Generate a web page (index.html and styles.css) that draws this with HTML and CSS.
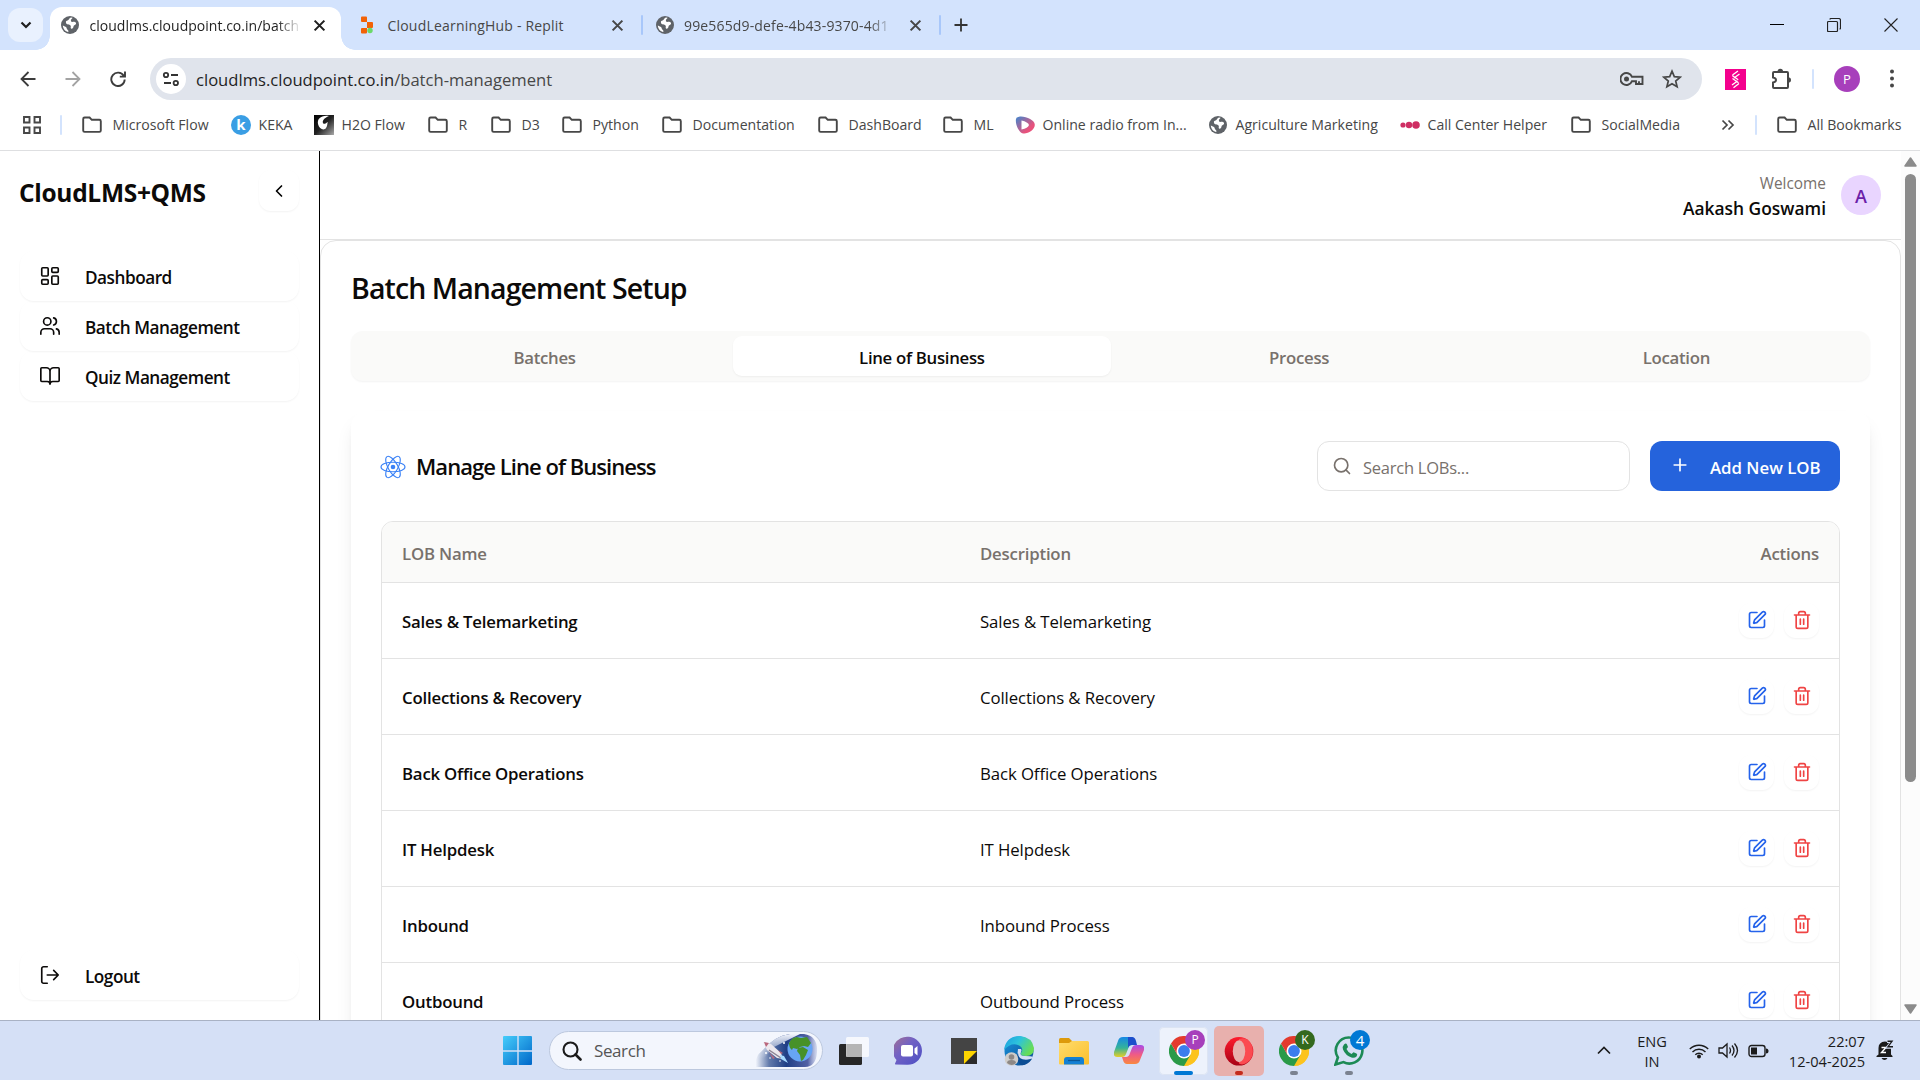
FILE: index.html
```
<!DOCTYPE html>
<html lang="en">
<head>
<meta charset="utf-8">
<title>CloudLMS+QMS - Batch Management</title>
<link rel="stylesheet" href="styles.css">
</head>
<body>
<svg class="defs" aria-hidden="true">
  <defs>
    <linearGradient id="gWin" x1="0" y1="0" x2="1" y2="1"><stop offset="0" stop-color="#45cdfb"/><stop offset="1" stop-color="#0067c9"/></linearGradient>
    <linearGradient id="gRadio" x1="0" y1="0" x2="1" y2="1"><stop offset=".1" stop-color="#5480c4"/><stop offset=".7" stop-color="#e8527c"/></linearGradient>
    <linearGradient id="gH2o" x1="0" y1="0" x2="1" y2="1"><stop offset="0" stop-color="#000"/><stop offset=".5" stop-color="#222"/><stop offset="1" stop-color="#aaa"/></linearGradient>
    <linearGradient id="gChat" x1="0" y1="0" x2="1" y2="1"><stop offset="0" stop-color="#a57090"/><stop offset=".4" stop-color="#7262c4"/><stop offset="1" stop-color="#4c4fc4"/></linearGradient>
    <linearGradient id="gEdgeTop" x1="0" y1="0" x2="1" y2=".5"><stop offset="0" stop-color="#1a9be0"/><stop offset=".5" stop-color="#2dc3dc"/><stop offset="1" stop-color="#68dd55"/></linearGradient>
    <linearGradient id="gEdgeLow" x1="0" y1="0" x2="1" y2="1"><stop offset="0" stop-color="#1994dc"/><stop offset="1" stop-color="#0b4a92"/></linearGradient>
    <linearGradient id="gFolder" x1="0" y1="0" x2="1" y2="1"><stop offset="0" stop-color="#ffdc6d"/><stop offset="1" stop-color="#fbbf2b"/></linearGradient>
    <linearGradient id="gCopA" x1="0" y1="0" x2="0" y2="1"><stop offset="0" stop-color="#1688e6"/><stop offset=".55" stop-color="#35b398"/><stop offset="1" stop-color="#e6cf27"/></linearGradient>
    <linearGradient id="gCopB" x1="0" y1="0" x2="0" y2="1"><stop offset="0" stop-color="#a84be8"/><stop offset=".5" stop-color="#ef5b86"/><stop offset="1" stop-color="#f9893f"/></linearGradient>
    <linearGradient id="gOpera" x1="0" y1="0" x2="0" y2="1"><stop offset="0" stop-color="#ff1b2d"/><stop offset="1" stop-color="#a70014"/></linearGradient>
    <linearGradient id="gSpace" x1="0" y1="0" x2="1" y2="0"><stop offset="0" stop-color="#31508f" stop-opacity="0"/><stop offset=".22" stop-color="#31508f" stop-opacity=".75"/><stop offset=".5" stop-color="#1f3e85"/><stop offset=".85" stop-color="#5362a5"/><stop offset="1" stop-color="#8e9bd0" stop-opacity=".3"/></linearGradient>
    <linearGradient id="gFade" x1="0" y1="0" x2="0" y2="1"><stop offset="0" stop-color="#f3f6fd"/><stop offset=".75" stop-color="#f3f6fd" stop-opacity="0"/></linearGradient>
    <symbol id="folder" viewBox="0 0 20 20"><path d="M1.2 3.9q0-1.4 1.4-1.4h5l2.2 2.3h7.6q1.4 0 1.4 1.4v9.3q0 1.4-1.4 1.4H2.6q-1.4 0-1.4-1.4z" fill="none" stroke="#474747" stroke-width="1.9"/></symbol>
    <symbol id="globe" viewBox="0 0 20 20"><circle cx="10" cy="10" r="9" fill="#5f6368"/><path d="M11 2.6c-2 .2-1.500 2-3 2.600S5.500 6 6 8s3.500 1 4.500 2.500-.500 2 .500 3 2.500-.500 2.500-2 1.500-1 2.500-2.500c.300-1-.400-2.500-2.500-2.200s-3-.300-2.500-1.800 1.500-1.200 1.500-2.200zM2.800 10.500l3.200 1.600c1 .800.500 2 1.500 2.700s1 1.500.800 2.300C5.500 16.500 3.100 14 2.800 10.500z" fill="#fff"/></symbol>
    <symbol id="close" viewBox="0 0 12 12"><path d="M1.500 1.500l9 9M10.500 1.500l-9 9" stroke="currentColor" stroke-width="1.900" fill="none"/></symbol>
    <symbol id="edit" viewBox="0 0 24 24"><path d="M12 3H5a2 2 0 0 0-2 2v14a2 2 0 0 0 2 2h14a2 2 0 0 0 2-2v-7M18.375 2.625a1 1 0 0 1 3 3l-9.013 9.014a2 2 0 0 1-.853.505l-2.873.84a.5.5 0 0 1-.62-.62l.84-2.873a2 2 0 0 1 .506-.852z"/></symbol>
    <symbol id="trash" viewBox="0 0 24 24"><path d="M3 6h18M19 6v14c0 1-1 2-2 2H7c-1 0-2-1-2-2V6M8 6V4c0-1 1-2 2-2h4c1 0 2 1 2 2v2M10 11v6M14 11v6"/></symbol>
    <symbol id="chrome" viewBox="0 0 30 30"><path d="M15 15L2 7.500A15 15 0 0 1 28 7.500z" fill="#e33b2e"/><path d="M15 15L28 7.500A15 15 0 0 1 15 30z" fill="#fcc31e"/><path d="M28 7.500H15L21.500 18.700 15 30A15 15 0 0 0 28 7.500z" fill="#fcc31e"/><path d="M2 7.500A15 15 0 0 0 15 30l6.500-11.300L15 15 8.500 18.700z" fill="#2a9a48"/><path d="M2 7.500L8.500 18.700 15 7.500z" fill="#e33b2e"/><circle cx="15" cy="15" r="7.500" fill="#fff"/><circle cx="15" cy="15" r="5.900" fill="#3b7ded"/></symbol>
  </defs>
</svg>

<header class="tabstrip">
  <div class="tab-search"><svg width="12" height="8" viewBox="0 0 12 8"><path d="M1.500 1.500L6 6l4.500-4.500" fill="none" stroke="#1f1f1f" stroke-width="2.200"/></svg></div>
  <div class="tab tab-active">
    <svg class="fav"><use href="#globe"/></svg>
    <span class="tab-title t-a">cloudlms.cloudpoint.co.in/batch</span>
    <svg class="x"><use href="#close"/></svg>
  </div>
  <div class="tab tab-two">
    <svg class="fav" viewBox="0 0 20 20"><path d="M4 2.500q0-1 1-1h4q1 0 1 1V7H5Q4 7 4 6zM4 14q0-1 1-1h5v4.500q0 1-1 1H5q-1 0-1-1zM10 7h5q1 0 1 1v4q0 1-1 1h-5z" fill="#f26207"/><circle cx="13" cy="15.500" r="2.700" fill="#6bd968"/></svg>
    <span class="tab-title t-b">CloudLearningHub - Replit</span>
    <svg class="x"><use href="#close"/></svg>
  </div>
  <i class="vsep"></i>
  <div class="tab tab-three">
    <svg class="fav"><use href="#globe"/></svg>
    <span class="tab-title t-c">99e565d9-defe-4b43-9370-4d1</span>
    <svg class="x"><use href="#close"/></svg>
  </div>
  <i class="vsep"></i>
  <svg class="newtab" width="14" height="14" viewBox="0 0 14 14"><path d="M7 .5v13M.5 7h13" stroke="#333" stroke-width="1.800"/></svg>
  <div class="win-controls">
    <svg width="14" height="14" viewBox="0 0 14 14"><path d="M0 6.500h14" stroke="#000"/></svg>
    <svg width="14" height="14" viewBox="0 0 14 14"><path d="M.500 4.500q0-1 1-1h8q1 0 1 1v8q0 1-1 1h-8q-1 0-1-1zM3 1.500q0-1 1-1h7.500q2 0 2 2V10q0 1-1 1" fill="none" stroke="#222" stroke-width="1.200"/></svg>
    <svg width="14" height="14" viewBox="0 0 14 14"><path d="M.5.5l13 13M13.500.5l-13 13" stroke="#222" stroke-width="1.100"/></svg>
  </div>
</header>

<nav class="toolbar">
  <svg class="nav-ic" viewBox="0 0 16 16"><path d="M8.500 1L1.500 8l7 7M1.500 8H15.500" fill="none" stroke="#3c3c3c" stroke-width="1.800"/></svg>
  <svg class="nav-ic" viewBox="0 0 16 16"><path d="M7.500 1l7 7-7 7M14.500 8H.500" fill="none" stroke="#a3a3a3" stroke-width="1.800"/></svg>
  <svg class="nav-ic" viewBox="0 0 16 16"><path d="M13.700 4.800A6.700 6.700 0 1 0 14.700 8.500M15 .500V5.600H9.800" fill="none" stroke="#3c3c3c" stroke-width="1.900"/></svg>
  <div class="omnibox">
    <span class="site-info"><svg width="18" height="16" viewBox="0 0 18 16"><g fill="none" stroke="#333" stroke-width="1.800"><circle cx="4" cy="4" r="2.200"/><path d="M9 4h7M2 12h7"/><circle cx="13.800" cy="12" r="2.200"/></g></svg></span>
    <span class="url"><b>cloudlms.cloudpoint.co.in</b>/batch-management</span>
    <svg class="key" width="24" height="16" viewBox="0 0 24 16"><path d="M12 5.800A6 6 0 1 0 12 10.200h4V13h3v-2.800h0V13h3.500V5.800z" fill="none" stroke="#474747" stroke-width="1.900"/><circle cx="6.500" cy="8" r="2.500" fill="#474747"/></svg>
    <svg class="star" width="20" height="20" viewBox="0 0 20 20"><path d="M10 2.200l2.300 5.400 5.900.5-4.500 3.900 1.400 5.800-5.100-3.100-5.100 3.100L6.300 12 1.800 8.100l5.900-.5z" fill="none" stroke="#474747" stroke-width="1.700"/></svg>
  </div>
  <svg class="ext" width="21" height="21" viewBox="0 0 21 21"><path fill="#f4008d" d="M0 0h21v21H0z"/><path d="M13 2L7.500 6M14.500 5L9 9M7.200 6.500l6 4.200M7.500 9.500l6 4.200M12.500 12L7 16M14 14.500L8.500 18.800" stroke="#fff" stroke-width="1.300"/></svg>
  <svg class="puzzle" width="22" height="22" viewBox="0 0 22 22"><path d="M3 5q0-1 1-1h13q1 0 1 1v14q0 1-1 1H4q-1 0-1-1v-4.500q3-.5 3-2.500T3 9.500z" fill="none" stroke="#474747" stroke-width="2"/><path d="M7.500 4a2.800 3.200 0 0 1 5.600 0zM18 9.200a3 2.800 0 0 1 0 5.600z" fill="#474747"/></svg>
  <i class="vsep pale"></i>
  <span class="profile">P</span>
  <svg class="dots" width="6" height="20" viewBox="0 0 6 20"><circle cx="3" cy="2.500" r="2" fill="#474747"/><circle cx="3" cy="9.500" r="2" fill="#474747"/><circle cx="3" cy="16.500" r="2" fill="#474747"/></svg>
</nav>

<nav class="bookmarks">
  <svg width="20" height="20" viewBox="0 0 20 20"><path d="M2 2h5.500v5.500H2zM12.500 2H18v5.500h-5.500zM2 12.500h5.500V18H2zM12.500 12.500H18V18h-5.500z" fill="none" stroke="#474747" stroke-width="1.900"/></svg>
  <i class="vsep pale"></i>
  <a class="bm"><svg><use href="#folder"/></svg><span>Microsoft Flow</span></a>
  <a class="bm site"><span class="keka">k</span><span>KEKA</span></a>
  <a class="bm site"><svg viewBox="0 0 20 20"><path fill="url(#gH2o)" d="M0 0h20v20H0z"/><path d="M15 1C7 0 3 4 4 9s6 7 8 4 1-5 2-6c-2 1-4 3-5 1s1-5 6-7z" fill="#fff"/></svg><span>H2O Flow</span></a>
  <a class="bm"><svg><use href="#folder"/></svg><span>R</span></a>
  <a class="bm"><svg><use href="#folder"/></svg><span>D3</span></a>
  <a class="bm"><svg><use href="#folder"/></svg><span>Python</span></a>
  <a class="bm"><svg><use href="#folder"/></svg><span>Documentation</span></a>
  <a class="bm"><svg><use href="#folder"/></svg><span>DashBoard</span></a>
  <a class="bm"><svg><use href="#folder"/></svg><span>ML</span></a>
  <a class="bm site"><svg viewBox="0 0 20 20"><path d="M1 4Q2 1 6 1.500C12 2 20 5 19.800 10S13 19 8.500 18.500 0 9 1 4z" fill="url(#gRadio)"/><path d="M6.500 5.500q6.500 1.500 7.500 4.500-1 3-7.500 4.500z" fill="#fff"/></svg><span>Online radio from In...</span></a>
  <a class="bm site"><svg><use href="#globe"/></svg><span>Agriculture Marketing</span></a>
  <a class="bm site"><svg viewBox="0 0 20 20"><g fill="#cf2e63"><circle cx="3" cy="10" r="2.600"/><circle cx="9" cy="10" r="3.200"/><circle cx="16" cy="10" r="3.800"/></g></svg><span>Call Center Helper</span></a>
  <a class="bm"><svg><use href="#folder"/></svg><span>SocialMedia</span></a>
  <svg width="14" height="12" viewBox="0 0 14 12"><path d="M1.500 1.500L6 6l-4.500 4.500M7.500 1.500L12 6l-4.500 4.500" fill="none" stroke="#474747" stroke-width="1.700"/></svg>
  <i class="vsep pale"></i>
  <a class="bm"><svg><use href="#folder"/></svg><span>All Bookmarks</span></a>
</nav>

<div class="viewport">
  <aside class="sidebar">
    <div class="brand-row">
      <h1 class="brand">CloudLMS+QMS</h1>
      <button class="collapse"><svg class="lucide" width="20" height="20" viewBox="0 0 24 24"><path d="M15 18l-6-6 6-6"/></svg></button>
    </div>
    <div class="menu">
      <a class="item"><svg class="lucide" viewBox="0 0 24 24"><rect x="3" y="3" width="7" height="9" rx="1"/><rect x="14" y="3" width="7" height="5" rx="1"/><rect x="14" y="12" width="7" height="9" rx="1"/><rect x="3" y="16" width="7" height="5" rx="1"/></svg><span>Dashboard</span></a>
      <a class="item"><svg class="lucide" viewBox="0 0 24 24"><path d="M16 21v-2a4 4 0 0 0-4-4H6a4 4 0 0 0-4 4v2M22 21v-2a4 4 0 0 0-3-3.870M16 3.130a4 4 0 0 1 0 7.750"/><circle cx="9" cy="7" r="4"/></svg><span>Batch Management</span></a>
      <a class="item"><svg class="lucide" viewBox="0 0 24 24"><path d="M12 7v14M3 18a1 1 0 0 1-1-1V4a1 1 0 0 1 1-1h5a4 4 0 0 1 4 4 4 4 0 0 1 4-4h5a1 1 0 0 1 1 1v13a1 1 0 0 1-1 1h-6a3 3 0 0 0-3 3 3 3 0 0 0-3-3z"/></svg><span>Quiz Management</span></a>
    </div>
    <a class="item logout"><svg class="lucide" viewBox="0 0 24 24"><path d="M9 21H5a2 2 0 0 1-2-2V5a2 2 0 0 1 2-2h4M16 17l5-5-5-5M21 12H9"/></svg><span>Logout</span></a>
  </aside>

  <div class="page">
    <div class="topbar">
      <div class="who"><span class="welcome">Welcome</span><span class="name">Aakash Goswami</span></div>
      <span class="avatar">A</span>
    </div>
    <main class="panel">
      <h2 class="heading"><span>Batch Management Setup</span></h2>
      <div class="tabs">
        <span>Batches</span><span class="on">Line of Business</span><span>Process</span><span>Location</span>
      </div>
      <section class="card">
        <div class="card-head">
          <svg class="react" width="26" height="26" viewBox="0 0 26 26"><g fill="none" stroke="#3b82f6" stroke-width="1.100"><ellipse cx="13" cy="13" rx="12" ry="4.800"/><ellipse cx="13" cy="13" rx="12" ry="4.800" transform="rotate(60 13 13)"/><ellipse cx="13" cy="13" rx="12" ry="4.800" transform="rotate(120 13 13)"/></g><circle cx="13" cy="13" r="2.300" fill="#3b82f6"/></svg>
          <h3 class="card-title">Manage Line of Business</h3>
          <div class="search"><svg class="lucide" width="20" height="20" viewBox="0 0 24 24"><circle cx="11" cy="11" r="8"/><path d="M21 21l-4.300-4.300"/></svg><span>Search LOBs...</span></div>
          <button class="add"><svg class="lucide" width="20" height="20" viewBox="0 0 24 24"><path d="M5 12h14M12 5v14"/></svg><span>Add New LOB</span></button>
        </div>
        <div class="table">
          <div class="tr th"><span>LOB Name</span><span>Description</span><span class="act">Actions</span></div>
          <div class="tr"><b>Sales &amp; Telemarketing</b><span>Sales &amp; Telemarketing</span><span class="act"><i class="e"><svg><use href="#edit"/></svg></i><i class="d"><svg><use href="#trash"/></svg></i></span></div>
          <div class="tr"><b>Collections &amp; Recovery</b><span>Collections &amp; Recovery</span><span class="act"><i class="e"><svg><use href="#edit"/></svg></i><i class="d"><svg><use href="#trash"/></svg></i></span></div>
          <div class="tr"><b>Back Office Operations</b><span>Back Office Operations</span><span class="act"><i class="e"><svg><use href="#edit"/></svg></i><i class="d"><svg><use href="#trash"/></svg></i></span></div>
          <div class="tr"><b>IT Helpdesk</b><span>IT Helpdesk</span><span class="act"><i class="e"><svg><use href="#edit"/></svg></i><i class="d"><svg><use href="#trash"/></svg></i></span></div>
          <div class="tr"><b>Inbound</b><span>Inbound Process</span><span class="act"><i class="e"><svg><use href="#edit"/></svg></i><i class="d"><svg><use href="#trash"/></svg></i></span></div>
          <div class="tr"><b>Outbound</b><span>Outbound Process</span><span class="act"><i class="e"><svg><use href="#edit"/></svg></i><i class="d"><svg><use href="#trash"/></svg></i></span></div>
        </div>
      </section>
    </main>
  </div>

  <div class="scrollbar">
    <svg width="13" height="10" viewBox="0 0 13 10"><path d="M6.500 1L12 9H1z" fill="#8b8b8b" stroke="#8b8b8b" stroke-width="1.500" stroke-linejoin="round"/></svg>
    <i class="thumb"></i>
    <svg class="down" width="13" height="10" viewBox="0 0 13 10"><path d="M6.500 9L1 1h11z" fill="#8b8b8b" stroke="#8b8b8b" stroke-width="1.500" stroke-linejoin="round"/></svg>
  </div>
</div>

<footer class="taskbar">
  <svg class="start" width="30" height="30" viewBox="0 0 30 30"><path d="M1 0h13.300v14.300H0V1q0-1 1-1zM15.700 0H28q1 0 1 1v13.300H15.700zM0 15.700h14.300V29H1q-1 0-1-1zM15.700 15.700H29V28q0 1-1 1H15.700z" fill="url(#gWin)"/></svg>
  <div class="tb-search">
    <svg width="20" height="20" viewBox="0 0 20 20"><circle cx="8.500" cy="8.500" r="7" fill="none" stroke="#1b1b1b" stroke-width="2.100"/><path d="M13.500 13.500l5 5" stroke="#1b1b1b" stroke-width="2.600" stroke-linecap="round"/></svg>
    <span>Search</span>
    <svg class="scene" width="64" height="35" viewBox="0 0 64 35"><path d="M2 34Q0 24 8 18 20 3 36 1h14q14 2 13 18-1 15-12 15z" fill="url(#gSpace)"/><path d="M2 34Q0 24 8 18 20 3 36 1h10L20 14z" fill="url(#gFade)"/><path d="M9 9l8 2 10 9 2 6-6-1-10-8z" fill="#ece8ee"/><path d="M10 9l5 1-3 4zM24 17l5 3-2 1zM15 19l6 6-2 1z" fill="#b9677c"/><path d="M15 17l12 8" stroke="#8b8293" stroke-width="1.500"/><path d="M26 22l4 1 4 7-7-4z" fill="#a7daff"/><circle cx="46" cy="16" r="12.500" fill="#67a5f5"/><path d="M35 10q3-6 8-6l4 1 6-1 4 6-3 4-4-1-4 1-3 2-4-1-1 2q-3-2-3-7zM44 15l5-1 5 3-2 5-3 5-2 1-1-6-3-4z" fill="#479128"/><g fill="#fff"><circle cx="30" cy="10" r="1"/><circle cx="12" cy="20" r="1"/><circle cx="16" cy="25" r=".8"/><circle cx="26" cy="28" r=".8"/></g></svg>
  </div>
  <div class="apps">
    <span class="app"><svg width="30" height="30" viewBox="0 0 30 30"><rect x="0" y="8" width="23" height="21" rx="1.500" fill="#272727"/><rect x="7" y="1" width="23" height="20" rx="1.500" fill="#fff" fill-opacity=".78"/><path d="M7.500 8H23v13H7.500z" fill="#b5b5b5"/></svg></span>
    <span class="app"><svg width="30" height="30" viewBox="0 0 30 30"><path d="M15 .8a14.200 14 0 1 1-2.500 27.900L1.500 28.600q-1-.5 0-2l1-2.600A14.200 14 0 0 1 15 .8z" fill="url(#gChat)"/><rect x="7" y="9" width="12" height="11.500" rx="2" fill="#fff"/><path d="M20.500 12.500L23.500 10v9.500l-3-2.500z" fill="#fff"/></svg></span>
    <span class="app sticky"><svg width="30" height="30" viewBox="0 0 30 30"><path d="M3 2h26v26H3z" fill="#444"/><path d="M16 15h13v13H16z" fill="#2b2b2b"/><path d="M16 15h13L16 28z" fill="#fdd400"/></svg></span>
    <span class="app"><svg width="32" height="32" viewBox="0 0 32 32"><circle cx="16" cy="16" r="14.500" fill="url(#gEdgeLow)"/><path d="M1 15Q3 1 17 1q12 1 14 12 0 8-8 8-6 0-5-3 3-4-1-7Q9 6 1 15z" fill="url(#gEdgeTop)"/><path d="M15 14q-2 9 5 11 6 1 10-3-2-1-8-1-6 0-4-4 1-2 0-3z" fill="#d4dff5"/><path d="M15 18q0 9 14 6-5 7-11 6-6-4-3-12z" fill="#0c4d94"/><circle cx="8.500" cy="24" r="6.800" fill="#cfcdcb"/><circle cx="8.500" cy="22" r="2.800" fill="#8d8886"/><path d="M4 28q0-3 4.500-3T13 28q-4 4-9 0z" fill="#8d8886"/></svg></span>
    <span class="app"><svg width="30" height="30" viewBox="0 0 30 30"><path d="M0 3.500Q0 2 1.500 2H10l3 3v5H0z" fill="#dd9a0b"/><path d="M0 7h10l3-2h15.500Q30 5 30 6.500v21q0 1-1 1H1q-1 0-1-1z" fill="url(#gFolder)"/><path d="M5 24q0-3 3-3h14q3 0 3 3v4.500H5z" fill="#1380d4"/><path d="M9 24.500h12" stroke="#0b5796" stroke-width="1.300"/></svg></span>
    <span class="app"><svg width="30" height="30" viewBox="0 0 30 30"><path d="M9 1h8q3 0 4 4l1 4h-4q-3 0-4 4l-2 5q-1 3-4 3H3q-4 0-3-5L4 5q1-4 5-4z" fill="url(#gCopA)"/><path d="M14 1h4q3 0 4 4l1 4h-5q-3 0-4 3z" fill="#1c4ecb"/><path d="M21 28h-8q-3 0-4-4l-1-3h4q3 0 4-4l2-5q1-3 4-3h5q4 0 3 5l-4 10q-1 4-5 4z" fill="url(#gCopB)"/></svg></span>
    <span class="app tile"><svg width="30" height="30"><use href="#chrome"/></svg><em class="badge p">P</em><i class="ind blue"></i></span>
    <span class="app tile red"><svg width="30" height="30" viewBox="0 0 30 30"><path d="M15 1a14.300 14.300 0 1 0 0 28.600A14.300 14.300 0 1 0 15 1z" fill="url(#gOpera)"/><path d="M15 3q9-3 13 7 3 10-4 16-5 4-9 1.500z" fill="#fb4a50"/><ellipse cx="15" cy="15.300" rx="6.200" ry="11" fill="#e8b0ad"/></svg><i class="ind crimson"></i></span>
    <span class="app"><svg width="30" height="30"><use href="#chrome"/></svg><em class="badge k">K</em><i class="ind"></i></span>
    <span class="app"><svg width="30" height="30" viewBox="0 0 30 30"><path d="M15.500 1.500a13 13 0 1 1-6 24.600L1.500 28.500l2.400-7A13 13 0 0 1 15.500 1.500z" fill="none" stroke="#1c8a55" stroke-width="2.600"/><path d="M10 8.500q2-2 3 0l1 2.500-1.500 2q1.500 3.500 5 5l2-1.800 3 1.300q1.500 1 0 3-2 2-5 1-6-2-8.500-8-1-3 1-5z" fill="#1c8a55"/></svg><em class="badge n">4</em><i class="ind"></i></span>
  </div>
  <div class="tray">
    <svg width="14" height="9" viewBox="0 0 14 9"><path d="M1 7.500L7 1.500l6 6" fill="none" stroke="#1b1b1b" stroke-width="1.700"/></svg>
    <span class="lang">ENG<br>IN</span>
    <svg width="20" height="16" viewBox="0 0 20 16"><g fill="none" stroke="#1b1b1b" stroke-width="1.400"><path d="M.8 6a13 13 0 0 1 18.400 0M3.500 9a9.200 9.200 0 0 1 13 0M6.300 11.800a5.200 5.200 0 0 1 7.400 0"/></g><circle cx="10" cy="13.500" r="2" fill="#1b1b1b"/></svg>
    <svg width="21" height="17" viewBox="0 0 21 17"><g fill="none" stroke="#1b1b1b" stroke-width="1.300"><path d="M1 6h3.500l4.500-4v13l-4.500-4H1z"/><path d="M11.500 5.500q2 3 0 6M14 3.500q4 5 0 10M16.500 1.500q6 7 0 14"/></g></svg>
    <svg width="21" height="14" viewBox="0 0 21 14"><rect x="1" y="1.500" width="16" height="11" rx="2.500" fill="none" stroke="#1b1b1b" stroke-width="1.400"/><path d="M3 3.500h6v7H3z" fill="#1b1b1b"/><path d="M18 4.500q2.500 0 2.500 2.500T18 9.500z" fill="#1b1b1b"/></svg>
    <span class="clock">22:07<br>12-04-2025</span>
    <svg class="bell" width="18" height="20" viewBox="0 0 18 20"><path d="M2.500 14.500V8q0-6 6.500-6.500 6 0 6 6.500v6.500l1.500 1.500v1H.500v-1zM5.500 18h6q-1 2-3 2t-3-2z" fill="#1b1b1b"/><path d="M5.500 7.500h4.500l-4.500 5h4.500" stroke="#fff" fill="none" stroke-width="1.400"/><path d="M11 1.300h5.500L12 7h5.500" stroke="#d5e0f6" fill="none" stroke-width="3.400"/><path d="M11.500 1.300h4.500L12 6.700h5" stroke="#1b1b1b" fill="none" stroke-width="1.400"/></svg>
  </div>
</footer>
</body>
</html>
```
FILE: styles.css
```
* { box-sizing: border-box; }
body {
  margin: 0;
  width: 1920px;
  height: 1080px;
  overflow: hidden;
  display: flex;
  flex-direction: column;
  background: #fff;
  color: #0c0a09;
  font-family: "Open Sans", "Noto Sans", sans-serif;
}
svg { display: block; flex: none; }
.defs { width: 0; height: 0; position: absolute; }
h1, h2, h3 { margin: 0; font-weight: 600; }
button { border: 0; padding: 0; font: inherit; background: none; }
span, b { white-space: nowrap; }
.vsep { width: 2px; height: 20px; border-radius: 1px; background: #a8c7fa; flex: none; }
.vsep.pale { background: #d3e3fd; }

/* Tab strip */
.tabstrip { height: 50px; background: #d3e3fd; display: flex; align-items: center; flex: none; color: #474747; }
.tab-search { width: 35px; height: 34px; margin: 0 7px 0 8px; border-radius: 12px; background: #e9f1fe; display: grid; place-items: center; }
.tab { display: flex; align-items: center; font-size: 14px; }
.tab .fav { width: 20px; height: 20px; }
.tab .x { width: 13px; height: 13px; margin-left: auto; }
.tab-title { margin-left: 9.500px; }
.tab-active {
  width: 291px; height: 43px; margin-top: 7px; padding: 0 15px 7px 10px;
  background: #fff; border-radius: 12px 12px 0 0; color: #1f1f1f;
  position: relative;
}
.tab-active::before, .tab-active::after { content: ""; position: absolute; bottom: 0; width: 14px; height: 14px; }
.tab-active::before { left: -14px; background: radial-gradient(circle at 0 0, transparent 13.500px, #fff 14px); }
.tab-active::after { right: -14px; background: radial-gradient(circle at 100% 0, transparent 13.500px, #fff 14px); }
.t-a, .t-c { -webkit-mask-image: linear-gradient(90deg, #000 88%, transparent); mask-image: linear-gradient(90deg, #000 88%, transparent); }
.t-a { width: 212px; letter-spacing: .02px; }
.t-b { letter-spacing: .2px; margin-left: 10.500px; }
.t-c { width: 210px; letter-spacing: .15px; margin-left: 9px; }
.tab-two { width: 267px; margin: 0 17px 0 16px; }
.tab-three { width: 267px; margin: 0 17px 0 12px; }
.newtab { margin-left: 13px; }
.win-controls { display: flex; gap: 43px; margin-left: auto; padding-right: 22px; }

/* Toolbar */
.toolbar { height: 52px; display: flex; align-items: center; flex: none; padding: 6px 0 0 20px; background: #fff; }
.nav-ic { width: 16px; height: 16px; margin-right: 29px; margin-top: -1px; }
.omnibox { width: 1552px; height: 42px; margin-left: -5px; border-radius: 21px; background: #e0e4ec; display: flex; align-items: center; padding-left: 6px; flex: none; }
.site-info { width: 30px; height: 30px; border-radius: 50%; background: #fff; display: grid; place-items: center; }
.url { margin-left: 10px; font-size: 16.6px; color: #474747; }
.url b { font-weight: 400; color: #1f1f1f; }
.key { margin-left: auto; }
.star { margin: 0 20px 0 18px; }
.ext { margin-left: 23px; }
.puzzle { margin-left: 24px; }
.puzzle + .vsep { margin-left: 20px; }
.profile { width: 26px; height: 26px; border-radius: 50%; background: #a73fbb; color: #fff; font-size: 13px; display: grid; place-items: center; margin: 0 0 0 20px; }
.dots { margin-left: 29px; }

/* Bookmarks */
.bookmarks {
  height: 49px; flex: none; border-bottom: 1px solid #dedfe1; padding-left: 22px; padding-bottom: 3px;
  display: grid; align-items: center;
  grid-template-columns: 38px 22px 149px 83px 114px 63px 71px 100px 156px 125px 72px 193px 192px 171px 150px 34px 22px 1fr;
}
.bm { display: flex; align-items: center; gap: 10.500px; font-size: 14.100px; color: #474747; }
.bm.site { gap: 7.500px; }
.bm span + span, .bm svg + span { margin-top: -1px; }
.bm svg { width: 20px; height: 20px; }
.keka { width: 20px; height: 20px; border-radius: 50%; background: #3a9ee4; color: #fff; font-weight: 700; font-size: 15px; line-height: 19px; text-align: center; }

/* Page viewport */
.viewport { flex: 1; min-height: 0; display: flex; overflow: hidden; }
.lucide { fill: none; stroke: currentColor; stroke-width: 2; stroke-linecap: round; stroke-linejoin: round; }
.sidebar { width: 320px; flex: none; border-right: 1px solid #000; padding: 19px 20px 20px; display: flex; flex-direction: column; }
.brand-row { display: flex; align-items: center; justify-content: space-between; height: 41px; }
.brand { font-size: 24.500px; font-weight: 700; letter-spacing: -.3px; padding-top: 4px; margin-left: -1px; }
.collapse { width: 40px; height: 41px; border-radius: 12px; display: grid; place-items: center; box-shadow: 0 1px 2px rgba(0,0,0,.05); }
.menu { margin-top: 40px; }
.item { height: 50px; border-radius: 14px; box-shadow: 0 1px 2px rgba(0,0,0,.05); display: flex; align-items: center; padding-left: 19px; font-size: 17.200px; font-weight: 600; letter-spacing: -.48px; }
.item svg { width: 22px; height: 22px; margin-right: 24px; stroke-width: 1.8; }
.item span { padding-top: 2px; }
.logout { margin-top: auto; }

.page { flex: 1; min-width: 0; display: flex; flex-direction: column; }
.topbar { height: 89px; flex: none; border-bottom: 1px solid #e3e3e3; display: flex; justify-content: flex-end; align-items: center; gap: 15px; padding-right: 20px; }
.who { display: flex; flex-direction: column; align-items: flex-end; line-height: 24px; padding-top: 2px; }
.welcome { font-size: 15.400px; color: #78716c; }
.name { font-size: 17.400px; font-weight: 600; }
.avatar { width: 40px; height: 40px; border-radius: 50%; background: #e9d5ff; color: #6b21a8; font-weight: 600; font-size: 18px; display: grid; place-items: center; padding-top: 1px; }
.panel { flex: none; height: 900px; border: 1px solid #e3e3e3; border-radius: 16px 16px 0 0; padding: 30px 30px 0; }
.heading { font-size: 28.500px; line-height: 34px; letter-spacing: -.9px; height: 60px; }
.tabs { height: 50px; border-radius: 12px; background: #fafaf9; box-shadow: 0 1px 2px rgba(0,0,0,.05); padding: 5px; display: grid; grid-template-columns: repeat(4, 1fr); font-size: 16.800px; font-weight: 600; color: #78716c; letter-spacing: -.3px; }
.tabs span { display: grid; place-items: center; padding-top: 3px; }
.tabs .on { background: #fff; border-radius: 9px; color: #0c0a09; box-shadow: 0 1px 2px rgba(0,0,0,.05); }
.card { margin-top: 30px; height: 800px; border-radius: 16px; padding: 30px; box-shadow: 0 12px 19px -4px rgba(0,0,0,.1), 0 5px 8px -5px rgba(0,0,0,.08); }
.card-head { display: flex; align-items: center; height: 50px; }
.react { margin: 1px 0 0 -1px; }
.card-title { margin-left: 10px; font-size: 22px; letter-spacing: -.95px; }
.search { width: 313px; height: 50px; margin-left: auto; border: 1px solid #e3e3e3; border-radius: 12px; display: flex; align-items: center; gap: 11px; padding-left: 14px; font-size: 16.500px; color: #78716c; letter-spacing: -.25px; }
.search svg, .add svg { margin-top: -1px; }
.search span, .add span { padding-top: 3px; }
.add { width: 190px; height: 50px; margin-left: 20px; border-radius: 12px; background: #2563dc; color: #fff; display: flex; align-items: center; gap: 20px; padding-left: 20px; font-size: 16.800px; font-weight: 600; }
.add svg { margin-top: -2px; }
.table { margin-top: 30px; border: 1px solid #e3e3e3; border-radius: 12px; overflow: hidden; }
.tr { height: 76px; border-bottom: 1px solid #e3e3e3; display: grid; grid-template-columns: 578px 1fr 100px; align-items: center; padding: 2px 20px 0; font-size: 16.800px; letter-spacing: -.1px; }
.tr b { font-weight: 600; letter-spacing: -.2px; }
.tr.th { height: 61px; background: #fafaf9; color: #78716c; font-weight: 600; letter-spacing: -.2px; }
.act { display: flex; justify-content: flex-end; gap: 10px; }
.act i { width: 35px; height: 35px; border-radius: 12px; display: grid; place-items: center; box-shadow: 0 1px 2px rgba(0,0,0,.05); margin-top: -3px; }
.act svg { width: 20px; height: 20px; fill: none; stroke: currentColor; stroke-width: 2; stroke-linecap: round; stroke-linejoin: round; }
.e { color: #2563eb; }
.d { color: #ef4444; }

.scrollbar { width: 19px; flex: none; background: #fcfcfc; display: flex; flex-direction: column; align-items: center; padding: 6px 0; }
.thumb { width: 11px; height: 608px; margin-top: 7px; border-radius: 6px; background: #8b8b8b; }
.down { margin-top: auto; }

/* Taskbar */
.taskbar { height: 60px; flex: none; background: #d5e0f6; border-top: 1px solid #a9b2c4; display: flex; align-items: center; padding-left: 503px; color: #1b1b1b; }
.tb-search { width: 274px; height: 39px; margin-left: 16px; border-radius: 20px; background: #f3f6fd; border: 1px solid #bcc8de; display: flex; align-items: center; padding-left: 12px; font-size: 17px; color: #555; }
.tb-search span { margin-left: 12px; letter-spacing: -.4px; }
.scene { margin: 0 4px 0 auto; }
.apps { display: flex; margin-left: 3px; height: 50px; }
.app { width: 55px; display: grid; place-items: center; position: relative; }
.sticky { padding-right: 2px; }
.tile { width: 49px; margin: 1px 3px; background: #edf2fc; border-radius: 5px; box-shadow: inset 0 0 0 1px #dce4f3; }
.tile.red { margin: 0 2px 0 3px; width: 50px; background: #e8b0ad; box-shadow: none; }
.badge { position: absolute; right: 2px; top: 4px; width: 20px; height: 20px; border-radius: 50%; font: 12px/20px "Open Sans", sans-serif; text-align: center; color: #fff; }
.tile .badge { right: 3px; top: 3px; }
.p { background: #a73fbb; }
.k { background: #33691e; right: 6px; }
.n { background: #0078d4; right: 6px; font-size: 15px; }
.ind { position: absolute; bottom: 1px; left: calc(50% - 4px); width: 8px; height: 4px; border-radius: 2px; background: #7b8290; }
.ind.blue { width: 19px; left: 15px; bottom: 0; background: #0078d4; }
.ind.crimson { background: #c42b1c; }
.tray { margin-left: auto; display: flex; align-items: center; padding-right: 26px; font-size: 14.600px; line-height: 20px; }
.lang { text-align: center; margin: 0 22px 0 26px; }
.tray svg + svg { margin-left: 9px; }
.clock { text-align: right; margin: 0 11px 0 20px; }
.bell { margin-top: -1px; }
```
